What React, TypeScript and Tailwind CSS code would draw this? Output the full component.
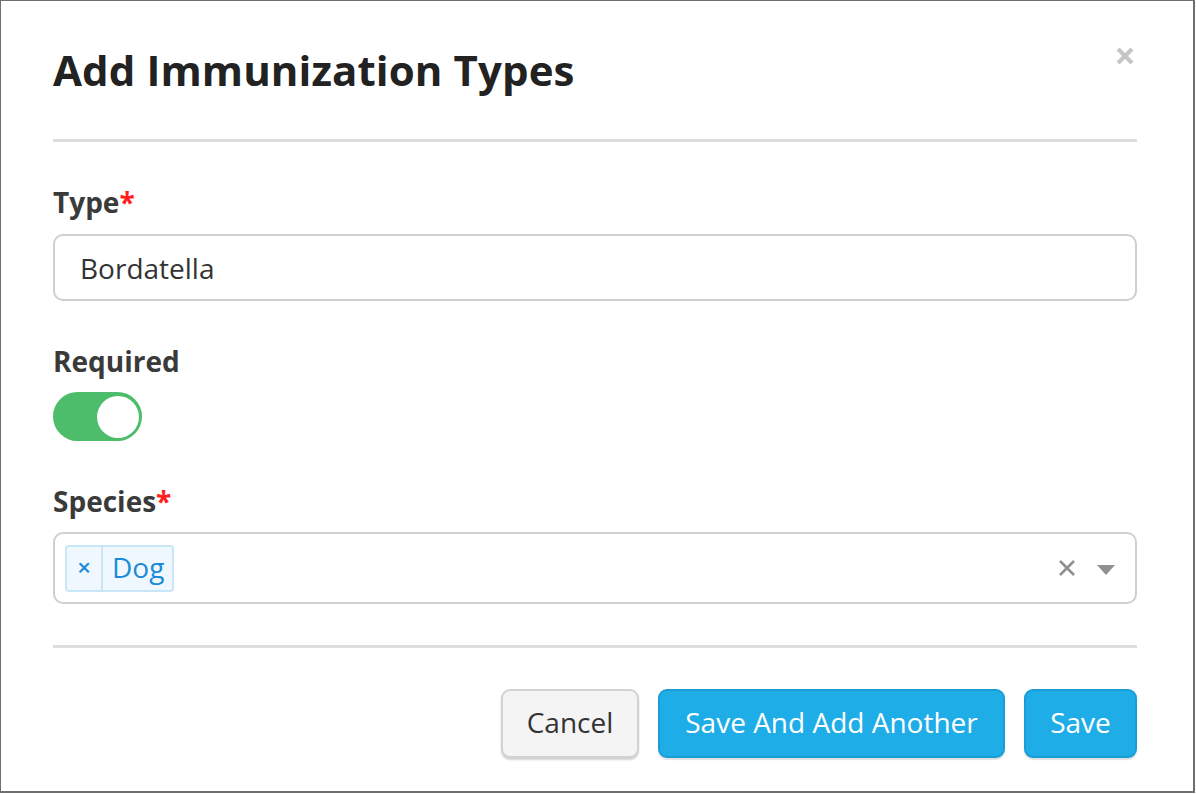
import { useState } from 'react';

export default function App() {
  const [required, setRequired] = useState(true);
  const [species, setSpecies] = useState<string[]>(['Dog']);

  return (
    <div className="w-[1196px] h-[794px] bg-white" style={{ fontFamily: '"Open Sans", "Liberation Sans", sans-serif' }}>
      <div className="w-[1195px] h-[793px] border border-[#6f6f6f] border-r-2 border-b-2 bg-white pl-[52px] pr-[56px] flex flex-col">
        {/* Header */}
        <div className="flex items-start justify-between h-[138px] pt-[40px]">
          <h3 className="text-[42px] leading-[58px] font-bold text-[#222] tracking-[0.1px]">Add Immunization Types</h3>
          <button className="mt-[5px] mr-[2px]">
            <svg width="20" height="20" viewBox="0 0 20 20">
              <path d="M3 3L17 17M17 3L3 17" stroke="#c6c6c6" strokeWidth="4.2" />
            </svg>
          </button>
        </div>
        <div className="h-[3px] bg-[#dddddd]" />

        {/* Body */}
        <div className="pt-[41px]">
          <label className="block text-[28px] leading-[38px] font-bold text-[#3a3a3a]">
            Type<span className="text-[#ff1e1e]">*</span>
          </label>
          <div className="mt-[13px] h-[67px] border-2 border-[#cfcfcf] rounded-[10px] flex items-center px-[25px]">
            <span className="text-[28px] text-[#333]">Bordatella</span>
          </div>

          <label className="block mt-[41px] text-[28px] leading-[38px] font-bold text-[#3a3a3a]">Required</label>
          <button
            onClick={() => setRequired(!required)}
            className={`mt-[12px] w-[89px] h-[49px] rounded-full flex items-center px-[3px] ${required ? 'bg-[#4dbd6b] justify-end' : 'bg-[#ddd] justify-start'}`}
          >
            <span className="w-[42px] h-[42px] rounded-full bg-white" />
          </button>

          <label className="block mt-[41px] text-[28px] leading-[38px] font-bold text-[#3a3a3a]">
            Species<span className="text-[#ff1e1e]">*</span>
          </label>
          <div className="mt-[12px] h-[72px] border-2 border-[#cfcfcf] rounded-[10px] flex items-center pl-[10px] pr-[20px]">
            <div className="flex-1 flex items-center gap-2">
              {species.map(s => (
                <div key={s} className="h-[47px] flex items-stretch border-2 border-[#c9e6f7] bg-[#eff8fe] rounded-[4px] text-[#1b8bd8]">
                  <button onClick={() => setSpecies(species.filter(x => x !== s))} className="w-[36px] flex items-center justify-center border-r-2 border-[#c9e6f7] text-[24px] font-semibold leading-none pb-[3px]">×</button>
                  <span className="pl-[9px] pr-[8px] flex items-center text-[28px] leading-none pb-[2px]">{s}</span>
                </div>
              ))}
            </div>
            <svg width="20" height="20" viewBox="0 0 20 20" className="mr-[20px]">
              <path d="M3 3L17 17M17 3L3 17" stroke="#8f8f8f" strokeWidth="2.6" />
            </svg>
            <svg width="18" height="10" viewBox="0 0 18 10" className="mt-[4px]">
              <path d="M0 0H18L9 10Z" fill="#909090" />
            </svg>
          </div>
        </div>

        <div className="mt-[41px] h-[3px] bg-[#dddddd]" />

        {/* Footer */}
        <div className="flex justify-end gap-[19px] mt-[41px]">
          <button className="h-[69px] w-[138px] rounded-[9px] bg-[#f4f4f4] border-2 border-[#d2d2d2] shadow-[0_2px_2px_rgba(0,0,0,0.18)] text-[28px] text-[#333] pb-[3px]">Cancel</button>
          <button className="h-[69px] w-[347px] rounded-[9px] bg-[#1fade8] border-2 border-[#1a9dd4] shadow-[0_2px_1px_rgba(0,0,0,0.12)] text-[28px] text-white pb-[3px]">Save And Add Another</button>
          <button className="h-[69px] w-[113px] rounded-[9px] bg-[#1fade8] border-2 border-[#1a9dd4] shadow-[0_2px_1px_rgba(0,0,0,0.12)] text-[28px] text-white pb-[3px]">Save</button>
        </div>
      </div>
    </div>
  );
}
